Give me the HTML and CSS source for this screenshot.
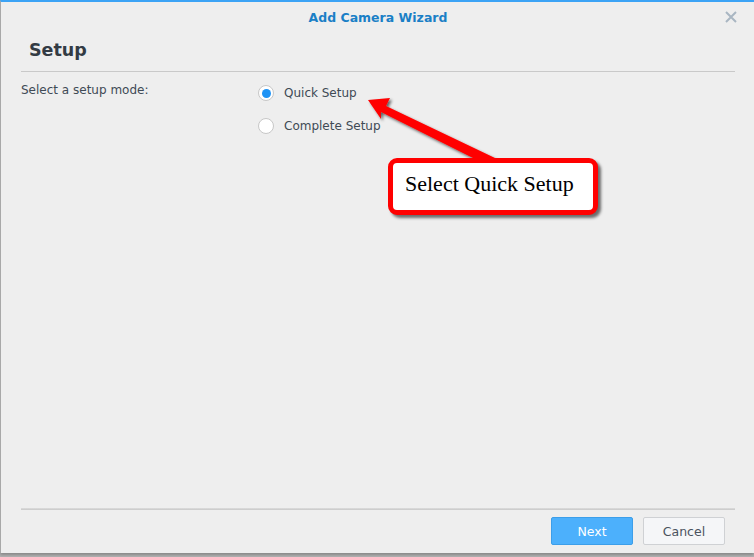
FILE: index.html
```html
<!DOCTYPE html>
<html>
<head>
<meta charset="utf-8">
<link rel="stylesheet" href="styles.css">
</head>
<body>
<div class="window">
  <div class="titlebar">
    <span class="title">Add Camera Wizard</span>
    <span class="close">
      <svg width="12" height="12" viewBox="0 0 12 12"><path d="M1 1L11 11M11 1L1 11" stroke="#a9b6c2" stroke-width="2"/></svg>
    </span>
  </div>
  <div class="header">Setup</div>
  <div class="rule"></div>
  <div class="content">
    <div class="label">Select a setup mode:</div>
    <div class="options">
      <label class="option"><span class="radio checked"></span><span>Quick Setup</span></label>
      <label class="option"><span class="radio"></span><span>Complete Setup</span></label>
    </div>
  </div>
  <div class="spacer"></div>
  <div class="rule bottom"></div>
  <div class="footer">
    <button class="btn primary">Next</button>
    <button class="btn">Cancel</button>
  </div>
</div>
<svg class="arrow" width="754" height="557" viewBox="0 0 754 557">
  <defs>
    <filter id="sh" x="-20%" y="-20%" width="140%" height="140%">
      <feGaussianBlur in="SourceAlpha" stdDeviation="1.5"/>
      <feOffset dx="2" dy="2" result="b"/>
      <feComponentTransfer><feFuncA type="linear" slope="0.6"/></feComponentTransfer>
      <feMerge><feMergeNode/><feMergeNode in="SourceGraphic"/></feMerge>
    </filter>
  </defs>
  <g filter="url(#sh)">
    <polygon points="368,100 390,98 386,106 495,158 489,166 381,112 381,119" fill="#ff0000"/>
  </g>
</svg>
<div class="callout">Select Quick Setup</div>
</body>
</html>
```
FILE: styles.css
```css
html, body {
  margin: 0;
  padding: 0;
  width: 754px;
  height: 557px;
  overflow: hidden;
  background: #b4b4b4;
  font-family: "DejaVu Sans", Verdana, sans-serif;
  position: relative;
}
.window {
  width: 753px;
  height: 551px;
  background: #eeeeee;
  border-top: 2px solid #3ba3f5;
  border-left: 1px solid #a8a8a8;
  display: flex;
  flex-direction: column;
  box-shadow: 0 2px 3px rgba(0,0,0,0.25);
}
.titlebar {
  height: 31px;
  display: flex;
  align-items: center;
  justify-content: center;
  position: relative;
}
.title {
  color: #1a7fc6;
  font-weight: bold;
  font-size: 12.5px;
  margin-left: 1px;
  margin-bottom: 1px;
}
.close {
  position: absolute;
  right: 17px;
  top: 9px;
  display: flex;
}
.header {
  font-size: 17.5px;
  font-weight: bold;
  color: #333b44;
  padding-left: 28px;
  height: 38px;
  line-height: 34px;
}
.rule {
  height: 1px;
  background: #c9c9c9;
  margin: 0 19px 0 20px;
}
.rule.bottom {
  height: 2px;
  background: linear-gradient(#dddddd, #c8c8c8);
}
.content {
  display: flex;
  padding-left: 20px;
  padding-top: 10px;
  font-size: 12px;
  color: #404a55;
}
.label {
  width: 237px;
  line-height: 16px;
}
.options {
  display: flex;
  flex-direction: column;
  gap: 15px;
  margin-top: 2px;
}
.option {
  display: flex;
  align-items: center;
  gap: 10px;
  height: 18px;
}
.radio {
  width: 16px;
  height: 16px;
  border: 1px solid #c7c7c7;
  border-radius: 50%;
  background: #ffffff;
  box-sizing: border-box;
  display: flex;
  align-items: center;
  justify-content: center;
}
.radio.checked::after {
  content: "";
  width: 9px;
  height: 9px;
  border-radius: 50%;
  background: #1e93f5;
}
.spacer { flex: 1; }
.footer {
  height: 43px;
  display: flex;
  justify-content: flex-end;
  align-items: flex-start;
  gap: 10px;
  padding-top: 7px;
  padding-right: 29px;
  box-sizing: border-box;
}
.btn {
  width: 82px;
  height: 28px;
  font-family: "DejaVu Sans", Verdana, sans-serif;
  font-size: 12.5px;
  border-radius: 2px;
  border: 1px solid #cfd1d4;
  background: #f5f6f8;
  color: #4a5360;
  padding: 0;
}
.btn.primary {
  background: #4cb0fc;
  border-color: #3c9ee9;
  color: #ffffff;
}
.arrow {
  position: absolute;
  left: 0;
  top: 0;
  pointer-events: none;
}
.callout {
  position: absolute;
  left: 388px;
  top: 158px;
  height: 47px;
  border: 5px solid #ff0000;
  border-radius: 9px;
  background: #ffffff;
  font-family: "Liberation Serif", "Times New Roman", serif;
  font-size: 22px;
  color: #000000;
  display: flex;
  align-items: center;
  padding-left: 12px;
  padding-bottom: 5px;
  box-sizing: content-box;
  width: 188px;
  height: 42px;
  box-shadow: 3px 3px 3px rgba(0,0,0,0.55);
}
```
